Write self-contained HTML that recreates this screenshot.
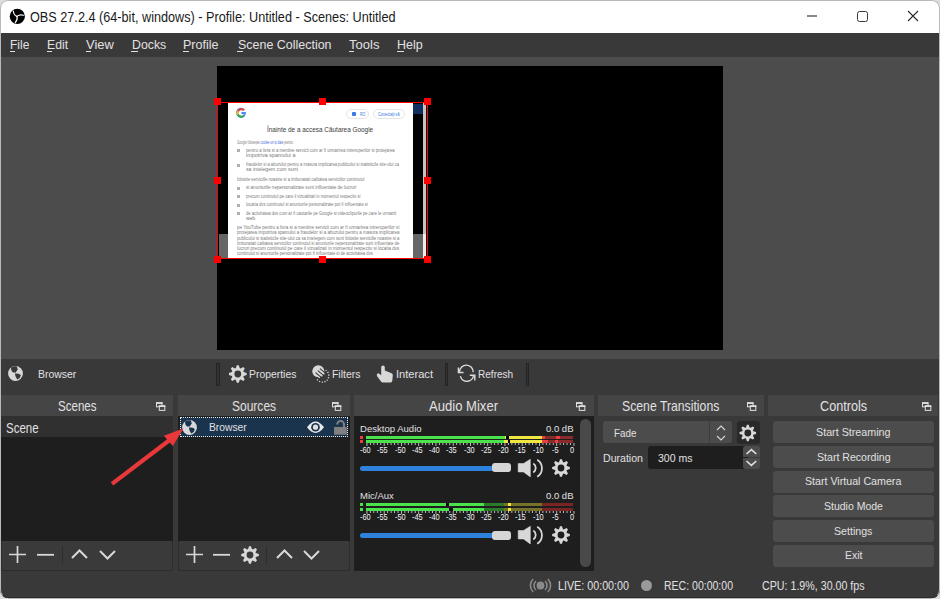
<!DOCTYPE html>
<html><head><meta charset="utf-8">
<style>
*{box-sizing:border-box;margin:0;padding:0}
html,body{width:940px;height:599px;overflow:hidden;background:#d9d9d9;font-family:"Liberation Sans",sans-serif;position:relative}
.a{position:absolute}
.t{position:absolute;white-space:nowrap;line-height:normal;transform-origin:0 0}
svg.a{overflow:visible}
</style></head><body>
<div class="a" style="left:0px;top:0px;width:940px;height:599px;background:#3a393a;"></div>
<div class="a" style="left:0px;top:0px;width:940px;height:33px;background:#ffffff;"></div>
<svg class="a" style="left:9px;top:8px;" width="17" height="17" viewBox="0 0 17 17"><circle cx="8.3" cy="8.4" r="7.6" fill="#000"/>
<g fill="none" stroke="#fff" stroke-width="1.15" stroke-linecap="round">
<path d="M7.9 8.4 Q4.8 7.2 4.3 3"/><path d="M7.9 8.4 Q10.8 6.2 14.4 7.3"/><path d="M8 8.4 Q8.9 11.6 6.3 14.6"/></g></svg>
<div class="t" style="left:30.00px;top:9.00px;font-size:14.5px;color:#1b1b1b;transform:scaleX(0.8738);">OBS 27.2.4 (64-bit, windows) - Profile: Untitled - Scenes: Untitled</div>
<div class="a" style="left:807px;top:15.2px;width:10px;height:1.5px;background:#8a8a8a;"></div>
<div class="a" style="left:857px;top:11px;width:11px;height:11px;border:1.6px solid #383838;border-radius:2.5px"></div>
<svg class="a" style="left:907px;top:10px;" width="12" height="12" viewBox="0 0 12 12"><path d="M1 1 L11 11 M11 1 L1 11" stroke="#2a2a2a" stroke-width="1.1"/></svg>
<div class="a" style="left:0px;top:32.6px;width:940px;height:24.15px;background:#3a393a;"></div>
<div class="t" style="left:10.00px;top:37.00px;font-size:13.4px;color:#e1e0e1;transform:scaleX(0.8940);">File</div>
<div class="a" style="left:9.7px;top:51px;width:5.5px;height:1px;background:#e1e0e1;"></div>
<div class="t" style="left:46.80px;top:37.00px;font-size:13.4px;color:#e1e0e1;transform:scaleX(0.9139);">Edit</div>
<div class="a" style="left:46.5px;top:51px;width:5.5px;height:1px;background:#e1e0e1;"></div>
<div class="t" style="left:86.20px;top:37.00px;font-size:13.4px;color:#e1e0e1;transform:scaleX(0.9640);">View</div>
<div class="a" style="left:85.9px;top:51px;width:5.5px;height:1px;background:#e1e0e1;"></div>
<div class="t" style="left:131.60px;top:37.00px;font-size:13.4px;color:#e1e0e1;transform:scaleX(0.9187);">Docks</div>
<div class="a" style="left:131.29999999999998px;top:51px;width:6.5px;height:1px;background:#e1e0e1;"></div>
<div class="t" style="left:183.40px;top:37.00px;font-size:13.4px;color:#e1e0e1;transform:scaleX(0.9371);">Profile</div>
<div class="a" style="left:183.1px;top:51px;width:5.5px;height:1px;background:#e1e0e1;"></div>
<div class="t" style="left:237.60px;top:37.00px;font-size:13.4px;color:#e1e0e1;transform:scaleX(0.9308);">Scene Collection</div>
<div class="a" style="left:237.29999999999998px;top:51px;width:5.5px;height:1px;background:#e1e0e1;"></div>
<div class="t" style="left:348.80px;top:37.00px;font-size:13.4px;color:#e1e0e1;transform:scaleX(0.9720);">Tools</div>
<div class="a" style="left:348.5px;top:51px;width:5.5px;height:1px;background:#e1e0e1;"></div>
<div class="t" style="left:397.30px;top:37.00px;font-size:13.4px;color:#e1e0e1;transform:scaleX(0.9324);">Help</div>
<div class="a" style="left:397.0px;top:51px;width:6.5px;height:1px;background:#e1e0e1;"></div>
<div class="a" style="left:0px;top:56.75px;width:940px;height:302px;background:#4c4c4c;"></div>
<div class="a" style="left:216.5px;top:65.5px;width:506.5px;height:284.5px;background:#555;"></div>
<div class="a" style="left:217px;top:65.5px;width:505.7px;height:284.2px;background:#000;"></div>
<div class="a" style="left:219px;top:234.2px;width:207px;height:23.5px;background:#666666;"></div><div class="a" style="left:413px;top:104px;width:10px;height:10px;background:#0f2f5f;"></div><div class="a" style="left:423px;top:103px;width:3px;height:131px;background:#c4c4c4;"></div><div class="a" style="left:423px;top:234px;width:3px;height:23.5px;background:#eeeeee;"></div><div class="a" style="left:227.75px;top:103.2px;width:185.25px;height:154.5px;background:#ffffff;"></div><svg class="a" style="left:236px;top:107px" width="11" height="12" viewBox="0 0 11 12"><path d="M9.6 5 H5.4 V7 H7.8 Q7.2 9 5.4 9 A3 3 0 1 1 7.4 3.8 L8.8 2.4 A5 5 0 1 0 10 6 Z" fill="#4a8af4"/><path d="M1.2 3.6 L2.9 4.8 A3 3 0 0 1 7.4 3.8 L8.8 2.4 A5 5 0 0 0 1.2 3.6Z" fill="#ea4335"/><path d="M1 8.2 L2.8 6.9 A3 3 0 0 1 2.9 4.8 L1.2 3.6 A5 5 0 0 0 1 8.2Z" fill="#fbbc05"/><path d="M1 8.2 A5 5 0 0 0 8.7 9.4 L7.3 8.1 A3 3 0 0 1 2.8 6.9 Z" fill="#34a853"/></svg><div class="a" style="left:346px;top:109px;width:23px;height:9.5px;border:0.8px solid #e6e6e6;border-radius:5px"></div><div class="a" style="left:373px;top:109px;width:32px;height:9.5px;border:0.8px solid #e6e6e6;border-radius:5px"></div><div class="a" style="left:352px;top:112px;width:4px;height:4px;background:#3a7ae8;border-radius:1px;"></div><div class="t" style="left:359.60px;top:112.00px;font-size:4.6px;color:#3a7ae8;transform:scaleX(0.7826);">RO</div><div class="t" style="left:378.00px;top:112.00px;font-size:4.6px;color:#3a7ae8;transform:scaleX(0.8363);">Conecta&#539;i-v&#259;</div><div class="t" style="left:266.95px;top:125.00px;font-size:7.6px;color:#3a3a3a;transform:scaleX(0.8439);">&Icirc;nainte de a accesa C&#259;utarea Google</div><div class="t" style="left:237.00px;top:140.00px;font-size:4.6px;color:#7a7a7a;transform:scaleX(0.6580);">Google folose&#537;te <span style="color:#4a6ae0">cookie-uri &#537;i date</span> pentru:</div><div class="a" style="left:237px;top:149px;width:3px;height:3px;background:#b0b0b0;"></div><div class="a" style="left:237px;top:163.5px;width:3px;height:3px;background:#b0b0b0;"></div><div class="t" style="left:245.50px;top:148.00px;font-size:4.6px;color:#7a7a7a;transform:scaleX(0.9216);">pentru a livra si a mentine servicii cum ar fi urmarirea intreruperilor si protejarea</div><div class="t" style="left:245.50px;top:153.00px;font-size:4.6px;color:#7a7a7a;transform:scaleX(1.1734);">impotriva spamului a</div><div class="t" style="left:245.50px;top:162.00px;font-size:4.6px;color:#7a7a7a;transform:scaleX(0.8930);">fraudelor si a abuzului pentru a masura implicarea publicului si statisticile site-ului ca</div><div class="t" style="left:245.50px;top:167.00px;font-size:4.6px;color:#7a7a7a;transform:scaleX(1.1277);">sa intelegem cum sunt</div><div class="t" style="left:237.00px;top:177.00px;font-size:4.6px;color:#7a7a7a;transform:scaleX(0.9065);">folosite serviciile noastre si a imbunatati calitatea serviciilor continutul</div><div class="a" style="left:237px;top:186.5px;width:3px;height:3px;background:#b0b0b0;"></div><div class="a" style="left:237px;top:195px;width:3px;height:3px;background:#b0b0b0;"></div><div class="a" style="left:237px;top:203.5px;width:3px;height:3px;background:#b0b0b0;"></div><div class="a" style="left:237px;top:212px;width:3px;height:3px;background:#b0b0b0;"></div><div class="t" style="left:245.50px;top:185.00px;font-size:4.6px;color:#7a7a7a;transform:scaleX(0.9934);">si anunturile nepersonalizate sunt influentate de lucruri</div><div class="t" style="left:245.50px;top:194.00px;font-size:4.6px;color:#7a7a7a;transform:scaleX(0.8939);">precum continutul pe care il vizualizati in momentul respectiv si</div><div class="t" style="left:245.50px;top:202.00px;font-size:4.6px;color:#7a7a7a;transform:scaleX(0.8985);">locatia dvs continutul si anunturile personalizate pot fi influentate si</div><div class="t" style="left:245.50px;top:211.00px;font-size:4.6px;color:#7a7a7a;transform:scaleX(0.9056);">de activitatea dvs cum ar fi cautarile pe Google si videoclipurile pe care le urmariti</div><div class="t" style="left:245.51px;top:216.00px;font-size:4.6px;color:#7a7a7a;transform:scaleX(1.0798);">web.</div><div class="t" style="left:237.00px;top:225.00px;font-size:4.6px;color:#7a7a7a;transform:scaleX(0.9840);">pe YouTube pentru a livra si a mentine servicii cum ar fi urmarirea intreruperilor si</div><div class="t" style="left:237.00px;top:230.00px;font-size:4.6px;color:#7a7a7a;transform:scaleX(0.9709);">protejarea impotriva spamului a fraudelor si a abuzului pentru a masura implicarea</div><div class="t" style="left:237.00px;top:236.00px;font-size:4.6px;color:#7a7a7a;transform:scaleX(0.9271);">publicului si statisticile site-ului ca sa intelegem cum sunt folosite serviciile noastre si a</div><div class="t" style="left:237.00px;top:241.00px;font-size:4.6px;color:#7a7a7a;transform:scaleX(0.9045);">imbunatati calitatea serviciilor continutul si anunturile nepersonalizate sunt influentate de</div><div class="t" style="left:237.00px;top:246.00px;font-size:4.6px;color:#7a7a7a;transform:scaleX(0.9860);">lucruri precum continutul pe care il vizualizati in momentul respectiv si locatia dvs</div><div class="t" style="left:237.00px;top:251.00px;font-size:4.6px;color:#7a7a7a;transform:scaleX(0.9091);">continutul si anunturile personalizate pot fi influentate si de activitatea dvs</div><div class="a" style="left:217px;top:101.8px;width:211px;height:157.6px;border:1.8px solid #ff0000"></div><div class="a" style="left:214.0px;top:98.0px;width:7px;height:7px;background:#ff0000;"></div><div class="a" style="left:214.0px;top:176.9px;width:7px;height:7px;background:#ff0000;"></div><div class="a" style="left:214.0px;top:255.8px;width:7px;height:7px;background:#ff0000;"></div><div class="a" style="left:319.0px;top:98.0px;width:7px;height:7px;background:#ff0000;"></div><div class="a" style="left:319.0px;top:255.8px;width:7px;height:7px;background:#ff0000;"></div><div class="a" style="left:424.0px;top:98.0px;width:7px;height:7px;background:#ff0000;"></div><div class="a" style="left:424.0px;top:176.9px;width:7px;height:7px;background:#ff0000;"></div><div class="a" style="left:424.0px;top:255.8px;width:7px;height:7px;background:#ff0000;"></div>
<div class="a" style="left:0px;top:358.75px;width:940px;height:36.25px;background:#3a393a;"></div>
<svg class="a" style="left:7.7px;top:366.3px;" width="15" height="15" viewBox="0 0 15 15"><circle cx="7.5" cy="7.5" r="7.4" fill="#d8d8d8"/>
<path d="M3.3 1.6 Q6 -0.2 8.9 0.5 L9.7 3.4 L8.5 5.3 L7.3 6.5 L5.0 6.5 L3.5 4.7 L3.1 2.4 Z" fill="#3a393a"/>
<path d="M6.8 6 L8.2 7.6" stroke="#3a393a" stroke-width="0.9" opacity="0.45"/>
<path d="M7.0 7.6 L10.9 7.7 L12.9 9.3 L11.7 11.9 L9.3 13.6 L7.9 11.3 L7.2 9.3 Z" fill="#3a393a"/></svg>
<div class="t" style="left:38.00px;top:367.00px;font-size:11.8px;color:#e1e0e1;transform:scaleX(0.8849);">Browser</div>
<div class="a" style="left:216.2px;top:363px;width:3.6px;height:22.8px;background:#333233;border:1px solid #252425;"></div>
<svg class="a" style="left:229px;top:365px;" width="18" height="18" viewBox="0 0 18 18"><path d="M6.88 3.10 L7.82 0.15 L9.78 0.15 L10.72 3.10 L11.61 3.48 L14.36 2.05 L15.75 3.44 L14.32 6.19 L14.70 7.08 L17.65 8.02 L17.65 9.98 L14.70 10.92 L14.32 11.81 L15.75 14.56 L14.36 15.95 L11.61 14.52 L10.72 14.90 L9.78 17.85 L7.82 17.85 L6.88 14.90 L5.99 14.52 L3.24 15.95 L1.85 14.56 L3.28 11.81 L2.90 10.92 L-0.05 9.98 L-0.05 8.02 L2.90 7.08 L3.28 6.19 L1.85 3.44 L3.24 2.05 L5.99 3.48 Z M12.20 9.00 A3.40 3.40 0 1 0 5.40 9.00 A3.40 3.40 0 1 0 12.20 9.00 Z" fill="#d8d8d8" fill-rule="evenodd"/></svg>
<div class="t" style="left:249.00px;top:367.00px;font-size:11.8px;color:#e1e0e1;transform:scaleX(0.8813);">Properties</div>
<svg class="a" style="left:308px;top:362px;" width="26" height="24" viewBox="0 0 26 24"><circle cx="10.3" cy="9.3" r="6" fill="#d8d8d8"/>
<g stroke="#d8d8d8" stroke-width="1.2" stroke-linecap="round"><path d="M7.5 12.5 L11.5 15.5"/><path d="M9.5 10.5 L14 14"/><path d="M12 8.5 L16 11.8"/></g>
<g stroke="#3a393a" stroke-width="1.1"><path d="M7.5 10.6 L13 15.2"/><path d="M9.8 8.6 L15.2 13.2"/><path d="M12 6.6 L16.8 10.6"/></g>
<path d="M17.6 8.2 A6.4 6.4 0 1 1 8.6 16.4" fill="none" stroke="#d8d8d8" stroke-width="1.3" stroke-dasharray="1.2 1.5"/></svg>
<div class="t" style="left:332.20px;top:367.00px;font-size:11.8px;color:#e1e0e1;transform:scaleX(0.8842);">Filters</div>
<svg class="a" style="left:374px;top:362px;" width="24" height="24" viewBox="0 0 24 24"><path d="M7.2 11 L7.2 5.2 A1.8 1.8 0 0 1 10.8 5.2 L10.8 8.6 L17.6 11.2 Q18.9 11.7 18.8 13.2 L18.3 18.8 Q18.1 20.6 16.6 20.6 L8.8 20.6 Q7.8 20.6 7.2 19.8 L3.1 14.2 Q2.3 12.6 3.3 11.7 Q4.4 10.9 5.6 11.9 L7.2 13.2 Z" fill="#d8d8d8"/></svg>
<div class="t" style="left:395.90px;top:367.00px;font-size:11.8px;color:#e1e0e1;transform:scaleX(0.9402);">Interact</div>
<div class="a" style="left:445.1px;top:363px;width:3px;height:22.8px;background:#333233;border:1px solid #252425;"></div>
<svg class="a" style="left:454px;top:362px;" width="26" height="24" viewBox="0 0 26 24"><g fill="none" stroke="#dcdcdc" stroke-width="1.4"><path d="M5.5 9.8 A6.7 6.7 0 0 1 19.2 10.2"/><path d="M6.4 14.2 A6.7 6.7 0 0 0 19.6 13"/>
<path d="M4.4 5.6 V10.5 H9.5"/><path d="M15.8 13.3 H20.8 V18.5"/></g></svg>
<div class="t" style="left:478.00px;top:367.00px;font-size:11.8px;color:#e1e0e1;transform:scaleX(0.8521);">Refresh</div>
<div class="a" style="left:526.2px;top:363px;width:3px;height:22.8px;background:#333233;border:1px solid #252425;"></div>
<div class="a" style="left:1px;top:395px;width:171.75px;height:21px;background:#464546;"></div>
<div class="t" style="left:57.70px;top:398.00px;font-size:14.2px;color:#e1e0e1;transform:scaleX(0.8151);">Scenes</div>
<svg class="a" style="left:155.8px;top:401.7px;" width="10" height="9" viewBox="0 0 10 9"><g fill="none" stroke="#e1e0e1" stroke-width="1"><rect x="0.5" y="0.8" width="5.5" height="4"/></g><rect x="0" y="0.3" width="6.5" height="1.6" fill="#e1e0e1"/>
<rect x="3.3" y="3.9" width="5.5" height="4.5" fill="#464546" stroke="#e1e0e1" stroke-width="1"/><rect x="2.8" y="3.4" width="6.5" height="1.6" fill="#e1e0e1"/></svg>
<div class="a" style="left:178.2px;top:395px;width:171.5px;height:21px;background:#464546;"></div>
<div class="t" style="left:231.80px;top:398.00px;font-size:14.2px;color:#e1e0e1;transform:scaleX(0.8467);">Sources</div>
<svg class="a" style="left:332.40000000000003px;top:401.7px;" width="10" height="9" viewBox="0 0 10 9"><g fill="none" stroke="#e1e0e1" stroke-width="1"><rect x="0.5" y="0.8" width="5.5" height="4"/></g><rect x="0" y="0.3" width="6.5" height="1.6" fill="#e1e0e1"/>
<rect x="3.3" y="3.9" width="5.5" height="4.5" fill="#464546" stroke="#e1e0e1" stroke-width="1"/><rect x="2.8" y="3.4" width="6.5" height="1.6" fill="#e1e0e1"/></svg>
<div class="a" style="left:354px;top:395px;width:239.79999999999995px;height:21px;background:#464546;"></div>
<div class="t" style="left:429.40px;top:398.00px;font-size:14.2px;color:#e1e0e1;transform:scaleX(0.9216);">Audio Mixer</div>
<svg class="a" style="left:576.1999999999999px;top:401.7px;" width="10" height="9" viewBox="0 0 10 9"><g fill="none" stroke="#e1e0e1" stroke-width="1"><rect x="0.5" y="0.8" width="5.5" height="4"/></g><rect x="0" y="0.3" width="6.5" height="1.6" fill="#e1e0e1"/>
<rect x="3.3" y="3.9" width="5.5" height="4.5" fill="#464546" stroke="#e1e0e1" stroke-width="1"/><rect x="2.8" y="3.4" width="6.5" height="1.6" fill="#e1e0e1"/></svg>
<div class="a" style="left:598px;top:395px;width:166px;height:21px;background:#464546;"></div>
<div class="t" style="left:622.10px;top:398.00px;font-size:14.2px;color:#e1e0e1;transform:scaleX(0.8629);">Scene Transitions</div>
<svg class="a" style="left:746.8px;top:401.7px;" width="10" height="9" viewBox="0 0 10 9"><g fill="none" stroke="#e1e0e1" stroke-width="1"><rect x="0.5" y="0.8" width="5.5" height="4"/></g><rect x="0" y="0.3" width="6.5" height="1.6" fill="#e1e0e1"/>
<rect x="3.3" y="3.9" width="5.5" height="4.5" fill="#464546" stroke="#e1e0e1" stroke-width="1"/><rect x="2.8" y="3.4" width="6.5" height="1.6" fill="#e1e0e1"/></svg>
<div class="a" style="left:768px;top:395px;width:170px;height:21px;background:#464546;"></div>
<div class="t" style="left:819.80px;top:398.00px;font-size:14.2px;color:#e1e0e1;transform:scaleX(0.8926);">Controls</div>
<svg class="a" style="left:921.8px;top:401.7px;" width="10" height="9" viewBox="0 0 10 9"><g fill="none" stroke="#e1e0e1" stroke-width="1"><rect x="0.5" y="0.8" width="5.5" height="4"/></g><rect x="0" y="0.3" width="6.5" height="1.6" fill="#e1e0e1"/>
<rect x="3.3" y="3.9" width="5.5" height="4.5" fill="#464546" stroke="#e1e0e1" stroke-width="1"/><rect x="2.8" y="3.4" width="6.5" height="1.6" fill="#e1e0e1"/></svg>
<div class="a" style="left:1px;top:416px;width:171.75px;height:124.7px;background:#1f1e1f;"></div>
<div class="a" style="left:1px;top:416px;width:171.75px;height:20.5px;background:#303030;"></div>
<div class="t" style="left:5.70px;top:420.00px;font-size:14.8px;color:#e1e0e1;transform:scaleX(0.7770);">Scene</div>
<div class="a" style="left:1px;top:540.7px;width:171.75px;height:30.1px;background:#3b3a3b;border:1px solid #2e2d2e;border-top:none;"></div>
<svg class="a" style="left:9px;top:546px;" width="17" height="17" viewBox="0 0 17 17"><path d="M8.5 0 V17 M0 8.5 H17" stroke="#d8d8d8" stroke-width="1.7"/></svg>
<svg class="a" style="left:36.5px;top:546px;" width="17" height="17" viewBox="0 0 17 17"><path d="M0 8.8 H17" stroke="#d8d8d8" stroke-width="1.8"/></svg>
<div class="a" style="left:62px;top:546px;width:1px;height:18px;background:#2e2d2e;"></div>
<svg class="a" style="left:71px;top:547px;" width="17" height="15" viewBox="0 0 17 15"><path d="M1 11 L8.5 3.5 L16 11" fill="none" stroke="#d8d8d8" stroke-width="2"/></svg>
<svg class="a" style="left:99px;top:547px;" width="17" height="15" viewBox="0 0 17 15"><path d="M1 4 L8.5 11.5 L16 4" fill="none" stroke="#d8d8d8" stroke-width="2"/></svg>
<div class="a" style="left:178.2px;top:416px;width:171.5px;height:124.7px;background:#1f1e1f;"></div>
<div class="a" style="left:179.5px;top:416.8px;width:168.7px;height:20.2px;background:#19344c;outline:1px dotted #e8e8e8;outline-offset:-1px;"></div>
<svg class="a" style="left:182px;top:420px;" width="16" height="16" viewBox="0 0 16 16"><circle cx="7.5" cy="7.5" r="7.4" fill="#d8d8d8"/>
<path d="M3.3 1.6 Q6 -0.2 8.9 0.5 L9.7 3.4 L8.5 5.3 L7.3 6.5 L5.0 6.5 L3.5 4.7 L3.1 2.4 Z" fill="#19344c"/>
<path d="M6.8 6 L8.2 7.6" stroke="#19344c" stroke-width="0.9" opacity="0.45"/>
<path d="M7.0 7.6 L10.9 7.7 L12.9 9.3 L11.7 11.9 L9.3 13.6 L7.9 11.3 L7.2 9.3 Z" fill="#19344c"/></svg>
<div class="t" style="left:208.50px;top:421.00px;font-size:11.3px;color:#e1e0e1;transform:scaleX(0.9120);">Browser</div>
<svg class="a" style="left:306px;top:421px;" width="19" height="13" viewBox="0 0 19 13"><path d="M1 6.2 Q9.5 -5.2 18 6.2 Q9.5 17.6 1 6.2 Z" fill="#e8e8e8"/><circle cx="9.5" cy="6.2" r="4.3" fill="#19344c"/><circle cx="9.5" cy="6.2" r="2.6" fill="#e0e0e0"/></svg>
<svg class="a" style="left:333px;top:420px;" width="16" height="17" viewBox="0 0 16 17"><path d="M4.2 4.4 A3.4 3.4 0 0 1 11 4.4 V7.4" fill="none" stroke="#808080" stroke-width="2"/><rect x="1.1" y="7" width="12.6" height="7.7" fill="#808080"/></svg>
<div class="a" style="left:178.2px;top:540.7px;width:171.5px;height:30.1px;background:#3b3a3b;border:1px solid #2e2d2e;border-top:none;"></div>
<svg class="a" style="left:186px;top:546px;" width="17" height="17" viewBox="0 0 17 17"><path d="M8.5 0 V17 M0 8.5 H17" stroke="#d8d8d8" stroke-width="1.7"/></svg>
<svg class="a" style="left:213px;top:546px;" width="17" height="17" viewBox="0 0 17 17"><path d="M0 8.8 H17" stroke="#d8d8d8" stroke-width="1.8"/></svg>
<svg class="a" style="left:241px;top:546px;" width="18" height="18" viewBox="0 0 18 18"><path d="M7.08 3.10 L8.02 0.15 L9.98 0.15 L10.92 3.10 L11.81 3.48 L14.56 2.05 L15.95 3.44 L14.52 6.19 L14.90 7.08 L17.85 8.02 L17.85 9.98 L14.90 10.92 L14.52 11.81 L15.95 14.56 L14.56 15.95 L11.81 14.52 L10.92 14.90 L9.98 17.85 L8.02 17.85 L7.08 14.90 L6.19 14.52 L3.44 15.95 L2.05 14.56 L3.48 11.81 L3.10 10.92 L0.15 9.98 L0.15 8.02 L3.10 7.08 L3.48 6.19 L2.05 3.44 L3.44 2.05 L6.19 3.48 Z M12.40 9.00 A3.40 3.40 0 1 0 5.60 9.00 A3.40 3.40 0 1 0 12.40 9.00 Z" fill="#d8d8d8" fill-rule="evenodd"/></svg>
<div class="a" style="left:266px;top:546px;width:1px;height:18px;background:#2e2d2e;"></div>
<svg class="a" style="left:276px;top:547px;" width="17" height="15" viewBox="0 0 17 15"><path d="M1 11 L8.5 3.5 L16 11" fill="none" stroke="#d8d8d8" stroke-width="2"/></svg>
<svg class="a" style="left:303px;top:547px;" width="17" height="15" viewBox="0 0 17 15"><path d="M1 4 L8.5 11.5 L16 4" fill="none" stroke="#d8d8d8" stroke-width="2"/></svg>
<svg class="a" style="left:105px;top:420px;" width="85" height="70" viewBox="0 0 85 70"><path d="M7 63.8 L66 19" stroke="#e8383a" stroke-width="4.2" stroke-linecap="butt"/><path d="M78.4 8.4 L58.8 15.7 L67.8 26 Z" fill="#e8383a"/></svg>
<div class="a" style="left:354px;top:416px;width:239.5px;height:154.5px;background:#1f1e1f;"></div>
<div class="t" style="left:359.80px;top:423.00px;font-size:9.8px;color:#e1e0e1;transform:scaleX(0.9747);">Desktop Audio</div><div class="t" style="left:545.50px;top:423.00px;font-size:9.8px;color:#e1e0e1;transform:scaleX(0.9706);">0.0 dB</div><div class="a" style="left:360px;top:436px;width:3.2px;height:3px;background:#e84040;"></div><div class="a" style="left:360px;top:440.3px;width:3.2px;height:3px;background:#e84040;"></div><div class="a" style="left:365.7px;top:436px;width:138.90000000000003px;height:3px;background:#4be34b;"></div><div class="a" style="left:504.6px;top:436px;width:1.3999999999999773px;height:3px;background:#f0e640;"></div><div class="a" style="left:506px;top:436px;width:2.6999999999999886px;height:3px;background:#000;"></div><div class="a" style="left:508.7px;top:436px;width:33.599999999999966px;height:3px;background:#f0e640;"></div><div class="a" style="left:542.3px;top:436px;width:2.7000000000000455px;height:3px;background:#e84040;"></div><div class="a" style="left:545px;top:436px;width:28.399999999999977px;height:3px;background:#8a2a2a;"></div><div class="a" style="left:555.7px;top:436px;width:4.5px;height:3px;background:#e84040;"></div><div class="a" style="left:365.7px;top:440.3px;width:138.3px;height:3px;background:#4be34b;"></div><div class="a" style="left:504px;top:440.3px;width:4px;height:3px;background:#f0e640;"></div><div class="a" style="left:508px;top:440.3px;width:2.3999999999999773px;height:3px;background:#000;"></div><div class="a" style="left:510.4px;top:440.3px;width:31.600000000000023px;height:3px;background:#f0e640;"></div><div class="a" style="left:542px;top:440.3px;width:6px;height:3px;background:#e84040;"></div><div class="a" style="left:548px;top:440.3px;width:25.399999999999977px;height:3px;background:#8a2a2a;"></div><div class="a" style="left:555px;top:440.3px;width:3.2999999999999545px;height:3px;background:#e84040;"></div><svg class="a" style="left:366px;top:443.2px;" width="209" height="3" viewBox="0 0 209 3"><rect x="0.50" y="0" width="0.9" height="3" fill="#c8c8c8"/><rect x="3.95" y="0" width="0.9" height="2" fill="#c8c8c8"/><rect x="7.40" y="0" width="0.9" height="2" fill="#c8c8c8"/><rect x="10.85" y="0" width="0.9" height="2" fill="#c8c8c8"/><rect x="14.30" y="0" width="0.9" height="2" fill="#c8c8c8"/><rect x="17.75" y="0" width="0.9" height="3" fill="#c8c8c8"/><rect x="21.20" y="0" width="0.9" height="2" fill="#c8c8c8"/><rect x="24.65" y="0" width="0.9" height="2" fill="#c8c8c8"/><rect x="28.10" y="0" width="0.9" height="2" fill="#c8c8c8"/><rect x="31.55" y="0" width="0.9" height="2" fill="#c8c8c8"/><rect x="35.00" y="0" width="0.9" height="3" fill="#c8c8c8"/><rect x="38.45" y="0" width="0.9" height="2" fill="#c8c8c8"/><rect x="41.90" y="0" width="0.9" height="2" fill="#c8c8c8"/><rect x="45.35" y="0" width="0.9" height="2" fill="#c8c8c8"/><rect x="48.80" y="0" width="0.9" height="2" fill="#c8c8c8"/><rect x="52.25" y="0" width="0.9" height="3" fill="#c8c8c8"/><rect x="55.70" y="0" width="0.9" height="2" fill="#c8c8c8"/><rect x="59.15" y="0" width="0.9" height="2" fill="#c8c8c8"/><rect x="62.60" y="0" width="0.9" height="2" fill="#c8c8c8"/><rect x="66.05" y="0" width="0.9" height="2" fill="#c8c8c8"/><rect x="69.50" y="0" width="0.9" height="3" fill="#c8c8c8"/><rect x="72.95" y="0" width="0.9" height="2" fill="#c8c8c8"/><rect x="76.40" y="0" width="0.9" height="2" fill="#c8c8c8"/><rect x="79.85" y="0" width="0.9" height="2" fill="#c8c8c8"/><rect x="83.30" y="0" width="0.9" height="2" fill="#c8c8c8"/><rect x="86.75" y="0" width="0.9" height="3" fill="#c8c8c8"/><rect x="90.20" y="0" width="0.9" height="2" fill="#c8c8c8"/><rect x="93.65" y="0" width="0.9" height="2" fill="#c8c8c8"/><rect x="97.10" y="0" width="0.9" height="2" fill="#c8c8c8"/><rect x="100.55" y="0" width="0.9" height="2" fill="#c8c8c8"/><rect x="104.00" y="0" width="0.9" height="3" fill="#c8c8c8"/><rect x="107.45" y="0" width="0.9" height="2" fill="#c8c8c8"/><rect x="110.90" y="0" width="0.9" height="2" fill="#c8c8c8"/><rect x="114.35" y="0" width="0.9" height="2" fill="#c8c8c8"/><rect x="117.80" y="0" width="0.9" height="2" fill="#c8c8c8"/><rect x="121.25" y="0" width="0.9" height="3" fill="#c8c8c8"/><rect x="124.70" y="0" width="0.9" height="2" fill="#c8c8c8"/><rect x="128.15" y="0" width="0.9" height="2" fill="#c8c8c8"/><rect x="131.60" y="0" width="0.9" height="2" fill="#c8c8c8"/><rect x="135.05" y="0" width="0.9" height="2" fill="#c8c8c8"/><rect x="138.50" y="0" width="0.9" height="3" fill="#c8c8c8"/><rect x="141.95" y="0" width="0.9" height="2" fill="#c8c8c8"/><rect x="145.40" y="0" width="0.9" height="2" fill="#c8c8c8"/><rect x="148.85" y="0" width="0.9" height="2" fill="#c8c8c8"/><rect x="152.30" y="0" width="0.9" height="2" fill="#c8c8c8"/><rect x="155.75" y="0" width="0.9" height="3" fill="#c8c8c8"/><rect x="159.20" y="0" width="0.9" height="2" fill="#c8c8c8"/><rect x="162.65" y="0" width="0.9" height="2" fill="#c8c8c8"/><rect x="166.10" y="0" width="0.9" height="2" fill="#c8c8c8"/><rect x="169.55" y="0" width="0.9" height="2" fill="#c8c8c8"/><rect x="173.00" y="0" width="0.9" height="3" fill="#c8c8c8"/><rect x="176.45" y="0" width="0.9" height="2" fill="#c8c8c8"/><rect x="179.90" y="0" width="0.9" height="2" fill="#c8c8c8"/><rect x="183.35" y="0" width="0.9" height="2" fill="#c8c8c8"/><rect x="186.80" y="0" width="0.9" height="2" fill="#c8c8c8"/><rect x="190.25" y="0" width="0.9" height="3" fill="#c8c8c8"/><rect x="193.70" y="0" width="0.9" height="2" fill="#c8c8c8"/><rect x="197.15" y="0" width="0.9" height="2" fill="#c8c8c8"/><rect x="200.60" y="0" width="0.9" height="2" fill="#c8c8c8"/><rect x="204.05" y="0" width="0.9" height="2" fill="#c8c8c8"/><rect x="207.50" y="0" width="0.9" height="3" fill="#c8c8c8"/></svg><div class="t" style="left:360.16px;top:445.00px;font-size:8.8px;color:#f4f4f4;transform:scaleX(0.8405);">-60</div><div class="t" style="left:377.41px;top:445.00px;font-size:8.8px;color:#f4f4f4;transform:scaleX(0.8405);">-55</div><div class="t" style="left:394.66px;top:445.00px;font-size:8.8px;color:#f4f4f4;transform:scaleX(0.8405);">-50</div><div class="t" style="left:411.91px;top:445.00px;font-size:8.8px;color:#f4f4f4;transform:scaleX(0.8405);">-45</div><div class="t" style="left:429.16px;top:445.00px;font-size:8.8px;color:#f4f4f4;transform:scaleX(0.8405);">-40</div><div class="t" style="left:446.41px;top:445.00px;font-size:8.8px;color:#f4f4f4;transform:scaleX(0.8405);">-35</div><div class="t" style="left:463.66px;top:445.00px;font-size:8.8px;color:#f4f4f4;transform:scaleX(0.8405);">-30</div><div class="t" style="left:480.91px;top:445.00px;font-size:8.8px;color:#f4f4f4;transform:scaleX(0.8405);">-25</div><div class="t" style="left:498.16px;top:445.00px;font-size:8.8px;color:#f4f4f4;transform:scaleX(0.8405);">-20</div><div class="t" style="left:515.41px;top:445.00px;font-size:8.8px;color:#f4f4f4;transform:scaleX(0.8405);">-15</div><div class="t" style="left:532.66px;top:445.00px;font-size:8.8px;color:#f4f4f4;transform:scaleX(0.8405);">-10</div><div class="t" style="left:551.96px;top:445.00px;font-size:8.8px;color:#f4f4f4;transform:scaleX(0.8405);">-5</div><div class="t" style="left:570.44px;top:445.00px;font-size:8.8px;color:#f4f4f4;transform:scaleX(0.8405);">0</div><div class="a" style="left:359.5px;top:466px;width:140px;height:4.5px;background:#2f82dc;border-radius:2.5px;"></div><div class="a" style="left:491.9px;top:463.4px;width:19.2px;height:9px;background:#d6d6d6;border-radius:3px;"></div><svg class="a" style="left:517px;top:457px;" width="28" height="22" viewBox="0 0 28 22"><path d="M1.2 6.6 H6.5 L13.3 2.3 V19.9 L6.5 14.9 H1.2 Z" fill="#d8d8d8" stroke="#d8d8d8" stroke-width="0.6" stroke-linejoin="round"/><g fill="none" stroke="#d8d8d8" stroke-width="1.8"><path d="M16.3 6.4 A5.4 5.4 0 0 1 16.3 15.4"/><path d="M20.2 2.8 A10 10 0 0 1 20.2 19.8"/></g></svg><svg class="a" style="left:552.4px;top:459px;" width="18" height="18" viewBox="0 0 18 18"><path d="M7.08 3.10 L8.02 0.15 L9.98 0.15 L10.92 3.10 L11.81 3.48 L14.56 2.05 L15.95 3.44 L14.52 6.19 L14.90 7.08 L17.85 8.02 L17.85 9.98 L14.90 10.92 L14.52 11.81 L15.95 14.56 L14.56 15.95 L11.81 14.52 L10.92 14.90 L9.98 17.85 L8.02 17.85 L7.08 14.90 L6.19 14.52 L3.44 15.95 L2.05 14.56 L3.48 11.81 L3.10 10.92 L0.15 9.98 L0.15 8.02 L3.10 7.08 L3.48 6.19 L2.05 3.44 L3.44 2.05 L6.19 3.48 Z M12.40 9.00 A3.40 3.40 0 1 0 5.60 9.00 A3.40 3.40 0 1 0 12.40 9.00 Z" fill="#d8d8d8" fill-rule="evenodd"/></svg><div class="t" style="left:359.80px;top:490.00px;font-size:9.8px;color:#e1e0e1;transform:scaleX(0.9699);">Mic/Aux</div><div class="t" style="left:545.50px;top:490.00px;font-size:9.8px;color:#e1e0e1;transform:scaleX(0.9706);">0.0 dB</div><div class="a" style="left:360px;top:503.3px;width:3.2px;height:3px;background:#4be34b;"></div><div class="a" style="left:360px;top:507.6px;width:3.2px;height:3px;background:#4be34b;"></div><div class="a" style="left:365.7px;top:503.3px;width:80.30000000000001px;height:3px;background:#4be34b;"></div><div class="a" style="left:446px;top:503.3px;width:3px;height:3px;background:#000;"></div><div class="a" style="left:449px;top:503.3px;width:35px;height:3px;background:#4be34b;"></div><div class="a" style="left:484px;top:503.3px;width:20px;height:3px;background:#2a7a2a;"></div><div class="a" style="left:504px;top:503.3px;width:38px;height:3px;background:#77722a;"></div><div class="a" style="left:542px;top:503.3px;width:31.399999999999977px;height:3px;background:#7a2424;"></div><div class="a" style="left:507.6px;top:503.3px;width:3.1999999999999886px;height:3px;background:#f0e640;"></div><div class="a" style="left:365.7px;top:507.6px;width:83.30000000000001px;height:3px;background:#4be34b;"></div><div class="a" style="left:449px;top:507.6px;width:3.6000000000000227px;height:3px;background:#000;"></div><div class="a" style="left:452.6px;top:507.6px;width:31.399999999999977px;height:3px;background:#4be34b;"></div><div class="a" style="left:484px;top:507.6px;width:20px;height:3px;background:#2a7a2a;"></div><div class="a" style="left:504px;top:507.6px;width:38px;height:3px;background:#77722a;"></div><div class="a" style="left:542px;top:507.6px;width:31.399999999999977px;height:3px;background:#7a2424;"></div><div class="a" style="left:507.6px;top:507.6px;width:3.1999999999999886px;height:3px;background:#f0e640;"></div><svg class="a" style="left:366px;top:510.5px;" width="209" height="3" viewBox="0 0 209 3"><rect x="0.50" y="0" width="0.9" height="3" fill="#c8c8c8"/><rect x="3.95" y="0" width="0.9" height="2" fill="#c8c8c8"/><rect x="7.40" y="0" width="0.9" height="2" fill="#c8c8c8"/><rect x="10.85" y="0" width="0.9" height="2" fill="#c8c8c8"/><rect x="14.30" y="0" width="0.9" height="2" fill="#c8c8c8"/><rect x="17.75" y="0" width="0.9" height="3" fill="#c8c8c8"/><rect x="21.20" y="0" width="0.9" height="2" fill="#c8c8c8"/><rect x="24.65" y="0" width="0.9" height="2" fill="#c8c8c8"/><rect x="28.10" y="0" width="0.9" height="2" fill="#c8c8c8"/><rect x="31.55" y="0" width="0.9" height="2" fill="#c8c8c8"/><rect x="35.00" y="0" width="0.9" height="3" fill="#c8c8c8"/><rect x="38.45" y="0" width="0.9" height="2" fill="#c8c8c8"/><rect x="41.90" y="0" width="0.9" height="2" fill="#c8c8c8"/><rect x="45.35" y="0" width="0.9" height="2" fill="#c8c8c8"/><rect x="48.80" y="0" width="0.9" height="2" fill="#c8c8c8"/><rect x="52.25" y="0" width="0.9" height="3" fill="#c8c8c8"/><rect x="55.70" y="0" width="0.9" height="2" fill="#c8c8c8"/><rect x="59.15" y="0" width="0.9" height="2" fill="#c8c8c8"/><rect x="62.60" y="0" width="0.9" height="2" fill="#c8c8c8"/><rect x="66.05" y="0" width="0.9" height="2" fill="#c8c8c8"/><rect x="69.50" y="0" width="0.9" height="3" fill="#c8c8c8"/><rect x="72.95" y="0" width="0.9" height="2" fill="#c8c8c8"/><rect x="76.40" y="0" width="0.9" height="2" fill="#c8c8c8"/><rect x="79.85" y="0" width="0.9" height="2" fill="#c8c8c8"/><rect x="83.30" y="0" width="0.9" height="2" fill="#c8c8c8"/><rect x="86.75" y="0" width="0.9" height="3" fill="#c8c8c8"/><rect x="90.20" y="0" width="0.9" height="2" fill="#c8c8c8"/><rect x="93.65" y="0" width="0.9" height="2" fill="#c8c8c8"/><rect x="97.10" y="0" width="0.9" height="2" fill="#c8c8c8"/><rect x="100.55" y="0" width="0.9" height="2" fill="#c8c8c8"/><rect x="104.00" y="0" width="0.9" height="3" fill="#c8c8c8"/><rect x="107.45" y="0" width="0.9" height="2" fill="#c8c8c8"/><rect x="110.90" y="0" width="0.9" height="2" fill="#c8c8c8"/><rect x="114.35" y="0" width="0.9" height="2" fill="#c8c8c8"/><rect x="117.80" y="0" width="0.9" height="2" fill="#c8c8c8"/><rect x="121.25" y="0" width="0.9" height="3" fill="#c8c8c8"/><rect x="124.70" y="0" width="0.9" height="2" fill="#c8c8c8"/><rect x="128.15" y="0" width="0.9" height="2" fill="#c8c8c8"/><rect x="131.60" y="0" width="0.9" height="2" fill="#c8c8c8"/><rect x="135.05" y="0" width="0.9" height="2" fill="#c8c8c8"/><rect x="138.50" y="0" width="0.9" height="3" fill="#c8c8c8"/><rect x="141.95" y="0" width="0.9" height="2" fill="#c8c8c8"/><rect x="145.40" y="0" width="0.9" height="2" fill="#c8c8c8"/><rect x="148.85" y="0" width="0.9" height="2" fill="#c8c8c8"/><rect x="152.30" y="0" width="0.9" height="2" fill="#c8c8c8"/><rect x="155.75" y="0" width="0.9" height="3" fill="#c8c8c8"/><rect x="159.20" y="0" width="0.9" height="2" fill="#c8c8c8"/><rect x="162.65" y="0" width="0.9" height="2" fill="#c8c8c8"/><rect x="166.10" y="0" width="0.9" height="2" fill="#c8c8c8"/><rect x="169.55" y="0" width="0.9" height="2" fill="#c8c8c8"/><rect x="173.00" y="0" width="0.9" height="3" fill="#c8c8c8"/><rect x="176.45" y="0" width="0.9" height="2" fill="#c8c8c8"/><rect x="179.90" y="0" width="0.9" height="2" fill="#c8c8c8"/><rect x="183.35" y="0" width="0.9" height="2" fill="#c8c8c8"/><rect x="186.80" y="0" width="0.9" height="2" fill="#c8c8c8"/><rect x="190.25" y="0" width="0.9" height="3" fill="#c8c8c8"/><rect x="193.70" y="0" width="0.9" height="2" fill="#c8c8c8"/><rect x="197.15" y="0" width="0.9" height="2" fill="#c8c8c8"/><rect x="200.60" y="0" width="0.9" height="2" fill="#c8c8c8"/><rect x="204.05" y="0" width="0.9" height="2" fill="#c8c8c8"/><rect x="207.50" y="0" width="0.9" height="3" fill="#c8c8c8"/></svg><div class="t" style="left:360.16px;top:512.00px;font-size:8.8px;color:#f4f4f4;transform:scaleX(0.8405);">-60</div><div class="t" style="left:377.41px;top:512.00px;font-size:8.8px;color:#f4f4f4;transform:scaleX(0.8405);">-55</div><div class="t" style="left:394.66px;top:512.00px;font-size:8.8px;color:#f4f4f4;transform:scaleX(0.8405);">-50</div><div class="t" style="left:411.91px;top:512.00px;font-size:8.8px;color:#f4f4f4;transform:scaleX(0.8405);">-45</div><div class="t" style="left:429.16px;top:512.00px;font-size:8.8px;color:#f4f4f4;transform:scaleX(0.8405);">-40</div><div class="t" style="left:446.41px;top:512.00px;font-size:8.8px;color:#f4f4f4;transform:scaleX(0.8405);">-35</div><div class="t" style="left:463.66px;top:512.00px;font-size:8.8px;color:#f4f4f4;transform:scaleX(0.8405);">-30</div><div class="t" style="left:480.91px;top:512.00px;font-size:8.8px;color:#f4f4f4;transform:scaleX(0.8405);">-25</div><div class="t" style="left:498.16px;top:512.00px;font-size:8.8px;color:#f4f4f4;transform:scaleX(0.8405);">-20</div><div class="t" style="left:515.41px;top:512.00px;font-size:8.8px;color:#f4f4f4;transform:scaleX(0.8405);">-15</div><div class="t" style="left:532.66px;top:512.00px;font-size:8.8px;color:#f4f4f4;transform:scaleX(0.8405);">-10</div><div class="t" style="left:551.96px;top:512.00px;font-size:8.8px;color:#f4f4f4;transform:scaleX(0.8405);">-5</div><div class="t" style="left:570.44px;top:512.00px;font-size:8.8px;color:#f4f4f4;transform:scaleX(0.8405);">0</div><div class="a" style="left:359.5px;top:533.3px;width:140px;height:4.5px;background:#2f82dc;border-radius:2.5px;"></div><div class="a" style="left:491.9px;top:530.6999999999999px;width:19.2px;height:9px;background:#d6d6d6;border-radius:3px;"></div><svg class="a" style="left:517px;top:524.3px;" width="28" height="22" viewBox="0 0 28 22"><path d="M1.2 6.6 H6.5 L13.3 2.3 V19.9 L6.5 14.9 H1.2 Z" fill="#d8d8d8" stroke="#d8d8d8" stroke-width="0.6" stroke-linejoin="round"/><g fill="none" stroke="#d8d8d8" stroke-width="1.8"><path d="M16.3 6.4 A5.4 5.4 0 0 1 16.3 15.4"/><path d="M20.2 2.8 A10 10 0 0 1 20.2 19.8"/></g></svg><svg class="a" style="left:552.4px;top:526.3px;" width="18" height="18" viewBox="0 0 18 18"><path d="M7.08 3.10 L8.02 0.15 L9.98 0.15 L10.92 3.10 L11.81 3.48 L14.56 2.05 L15.95 3.44 L14.52 6.19 L14.90 7.08 L17.85 8.02 L17.85 9.98 L14.90 10.92 L14.52 11.81 L15.95 14.56 L14.56 15.95 L11.81 14.52 L10.92 14.90 L9.98 17.85 L8.02 17.85 L7.08 14.90 L6.19 14.52 L3.44 15.95 L2.05 14.56 L3.48 11.81 L3.10 10.92 L0.15 9.98 L0.15 8.02 L3.10 7.08 L3.48 6.19 L2.05 3.44 L3.44 2.05 L6.19 3.48 Z M12.40 9.00 A3.40 3.40 0 1 0 5.60 9.00 A3.40 3.40 0 1 0 12.40 9.00 Z" fill="#d8d8d8" fill-rule="evenodd"/></svg><div class="a" style="left:580px;top:419.2px;width:11px;height:148px;background:#4a494a;border-radius:5.5px;"></div>
<div class="a" style="left:603px;top:421px;width:128.6px;height:22px;background:#4c4c4c;border-radius:3px"></div>
<div class="a" style="left:709px;top:421px;width:1px;height:22px;background:#3e3d3e;"></div>
<svg class="a" style="left:715px;top:424px;" width="12" height="18" viewBox="0 0 12 18"><path d="M2 6 L6 2 L10 6 M2 12 L6 16 L10 12" fill="none" stroke="#d8d8d8" stroke-width="1.1"/></svg>
<div class="t" style="left:613.70px;top:427.00px;font-size:11px;color:#e1e0e1;transform:scaleX(0.8935);">Fade</div>
<div class="a" style="left:736.7px;top:421px;width:23px;height:22.5px;background:#2a292a;border-radius:3px"></div>
<svg class="a" style="left:739px;top:423.5px;" width="18" height="18" viewBox="0 0 18 18"><path d="M7.01 3.48 L7.89 0.75 L9.71 0.75 L10.59 3.48 L11.43 3.83 L13.99 2.52 L15.28 3.81 L13.97 6.37 L14.32 7.21 L17.05 8.09 L17.05 9.91 L14.32 10.79 L13.97 11.63 L15.28 14.19 L13.99 15.48 L11.43 14.17 L10.59 14.52 L9.71 17.25 L7.89 17.25 L7.01 14.52 L6.17 14.17 L3.61 15.48 L2.32 14.19 L3.63 11.63 L3.28 10.79 L0.55 9.91 L0.55 8.09 L3.28 7.21 L3.63 6.37 L2.32 3.81 L3.61 2.52 L6.17 3.83 Z M12.20 9.00 A3.40 3.40 0 1 0 5.40 9.00 A3.40 3.40 0 1 0 12.20 9.00 Z" fill="#d8d8d8" fill-rule="evenodd"/></svg>
<div class="t" style="left:603.00px;top:452.00px;font-size:11.2px;color:#e1e0e1;transform:scaleX(0.9448);">Duration</div>
<div class="a" style="left:648.3px;top:446.3px;width:100px;height:22.5px;background:#1f1e1f;border-radius:3px"></div>
<div class="a" style="left:743px;top:446.3px;width:16.7px;height:10.8px;background:#4c4c4c;border-radius:3px 3px 0 0"></div>
<div class="a" style="left:743px;top:458px;width:16.7px;height:10.8px;background:#4c4c4c;border-radius:0 0 3px 3px"></div>
<svg class="a" style="left:743px;top:446px;" width="17" height="23" viewBox="0 0 17 23"><path d="M3.5 8 L8.4 3.6 L13.3 8 M3.5 15 L8.4 19.4 L13.3 15" fill="none" stroke="#e1e0e1" stroke-width="1.6"/></svg>
<div class="t" style="left:657.70px;top:452.00px;font-size:11.2px;color:#e1e0e1;transform:scaleX(0.9421);">300 ms</div>
<div class="a" style="left:773px;top:421px;width:161px;height:21.6px;background:#4c4c4c;border-radius:3px"></div>
<div class="t" style="left:816.40px;top:426.00px;font-size:11.4px;color:#e1e0e1;transform:scaleX(0.9420);">Start Streaming</div>
<div class="a" style="left:773px;top:446px;width:161px;height:21.8px;background:#4c4c4c;border-radius:3px"></div>
<div class="t" style="left:816.80px;top:451.00px;font-size:11.4px;color:#e1e0e1;transform:scaleX(0.9292);">Start Recording</div>
<div class="a" style="left:773px;top:470.6px;width:161px;height:22.1px;background:#4c4c4c;border-radius:3px"></div>
<div class="t" style="left:805.20px;top:475.00px;font-size:11.4px;color:#e1e0e1;transform:scaleX(0.9353);">Start Virtual Camera</div>
<div class="a" style="left:773px;top:495.3px;width:161px;height:21.7px;background:#4c4c4c;border-radius:3px"></div>
<div class="t" style="left:823.90px;top:500.00px;font-size:11.4px;color:#e1e0e1;transform:scaleX(0.9217);">Studio Mode</div>
<div class="a" style="left:773px;top:520.2px;width:161px;height:21.6px;background:#4c4c4c;border-radius:3px"></div>
<div class="t" style="left:834.20px;top:525.00px;font-size:11.4px;color:#e1e0e1;transform:scaleX(0.9323);">Settings</div>
<div class="a" style="left:773px;top:545.1px;width:161px;height:21.9px;background:#4c4c4c;border-radius:3px"></div>
<div class="t" style="left:844.90px;top:549.00px;font-size:11.4px;color:#e1e0e1;transform:scaleX(0.9156);">Exit</div>
<svg class="a" style="left:529.8px;top:578.2px;" width="21" height="15" viewBox="0 0 21 15"><circle cx="10.5" cy="7.5" r="3.9" fill="#8a8a8a"/><g fill="none" stroke="#8a8a8a" stroke-width="1.6"><path d="M6 3 A6 6 0 0 0 6 12"/><path d="M15 3 A6 6 0 0 1 15 12"/><path d="M3.2 1 A9 9 0 0 0 3.2 14"/><path d="M17.8 1 A9 9 0 0 1 17.8 14"/></g></svg>
<div class="t" style="left:557.90px;top:579.00px;font-size:12px;color:#e1e0e1;transform:scaleX(0.8943);">LIVE: 00:00:00</div>
<div class="a" style="left:641px;top:580.3px;width:11px;height:11px;border-radius:50%;background:#9a9a9a"></div>
<div class="t" style="left:663.80px;top:579.00px;font-size:12px;color:#e1e0e1;transform:scaleX(0.8765);">REC: 00:00:00</div>
<div class="t" style="left:762.10px;top:579.00px;font-size:12px;color:#e1e0e1;transform:scaleX(0.8891);">CPU: 1.9%, 30.00 fps</div>
<div class="a" style="left:-0.5px;top:-0.5px;width:940.3px;height:598.3px;border:1.3px solid #b9b9b9;border-bottom-color:#2e2e2e;border-radius:8px;box-shadow:0 0 0 30px #dcdcdc"></div>
<div class="a" style="left:8px;top:597.8px;width:924px;height:1.2px;background:#b4b4b4;"></div>
</body></html>
